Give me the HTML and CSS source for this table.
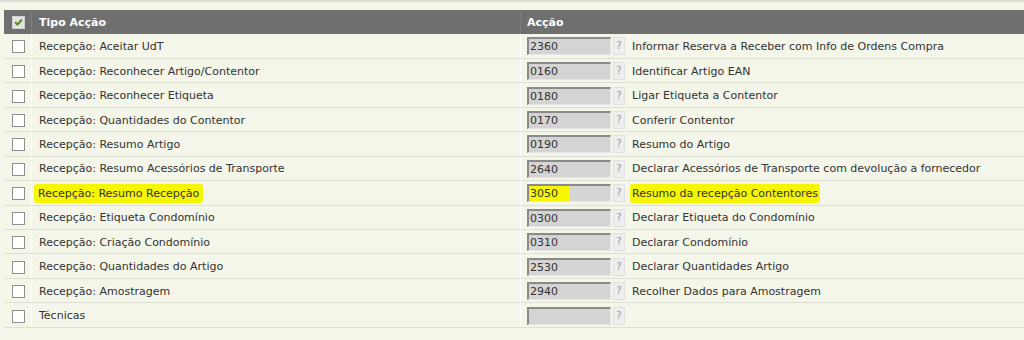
FILE: index.html
```html
<!DOCTYPE html>
<html lang="pt">
<head>
<meta charset="utf-8">
<link rel="stylesheet" href="styles.css">
</head>
<body>
<div class="page">
<table class="grid">
  <thead>
    <tr>
      <th class="c-chk"><span class="hchk"><svg width="9" height="8" viewBox="0 0 9 8"><path d="M1 4 L3.5 6.5 L8 1.5" fill="none" stroke="#5c8a1e" stroke-width="2"/></svg></span></th>
      <th class="c-tipo">Tipo Acção</th>
      <th class="c-acc">Acção</th>
    </tr>
  </thead>
  <tbody>
    <tr><td class="c-chk"><span class="chk"></span></td><td class="c-tipo">Recepção: Aceitar UdT</td><td class="c-acc"><div class="acc"><span class="inp">2360</span><span class="q">?</span><span class="desc">Informar Reserva a Receber com Info de Ordens Compra</span></div></td></tr>
    <tr><td class="c-chk"><span class="chk"></span></td><td class="c-tipo">Recepção: Reconhecer Artigo/Contentor</td><td class="c-acc"><div class="acc"><span class="inp">0160</span><span class="q">?</span><span class="desc">Identificar Artigo EAN</span></div></td></tr>
    <tr><td class="c-chk"><span class="chk"></span></td><td class="c-tipo">Recepção: Reconhecer Etiqueta</td><td class="c-acc"><div class="acc"><span class="inp">0180</span><span class="q">?</span><span class="desc">Ligar Etiqueta a Contentor</span></div></td></tr>
    <tr><td class="c-chk"><span class="chk"></span></td><td class="c-tipo">Recepção: Quantidades do Contentor</td><td class="c-acc"><div class="acc"><span class="inp">0170</span><span class="q">?</span><span class="desc">Conferir Contentor</span></div></td></tr>
    <tr><td class="c-chk"><span class="chk"></span></td><td class="c-tipo">Recepção: Resumo Artigo</td><td class="c-acc"><div class="acc"><span class="inp">0190</span><span class="q">?</span><span class="desc">Resumo do Artigo</span></div></td></tr>
    <tr><td class="c-chk"><span class="chk"></span></td><td class="c-tipo">Recepção: Resumo Acessórios de Transporte</td><td class="c-acc"><div class="acc"><span class="inp">2640</span><span class="q">?</span><span class="desc">Declarar Acessórios de Transporte com devolução a fornecedor</span></div></td></tr>
    <tr><td class="c-chk"><span class="chk"></span></td><td class="c-tipo"><span class="hl hl-tipo">Recepção: Resumo Recepção</span></td><td class="c-acc"><div class="acc"><span class="inp"><span class="hl hl-val">3050</span></span><span class="q">?</span><span class="desc"><span class="hl hl-desc">Resumo da recepção Contentores</span></span></div></td></tr>
    <tr><td class="c-chk"><span class="chk"></span></td><td class="c-tipo">Recepção: Etiqueta Condomínio</td><td class="c-acc"><div class="acc"><span class="inp">0300</span><span class="q">?</span><span class="desc">Declarar Etiqueta do Condomínio</span></div></td></tr>
    <tr><td class="c-chk"><span class="chk"></span></td><td class="c-tipo">Recepção: Criação Condomínio</td><td class="c-acc"><div class="acc"><span class="inp">0310</span><span class="q">?</span><span class="desc">Declarar Condomínio</span></div></td></tr>
    <tr><td class="c-chk"><span class="chk"></span></td><td class="c-tipo">Recepção: Quantidades do Artigo</td><td class="c-acc"><div class="acc"><span class="inp">2530</span><span class="q">?</span><span class="desc">Declarar Quantidades Artigo</span></div></td></tr>
    <tr><td class="c-chk"><span class="chk"></span></td><td class="c-tipo">Recepção: Amostragem</td><td class="c-acc"><div class="acc"><span class="inp">2940</span><span class="q">?</span><span class="desc">Recolher Dados para Amostragem</span></div></td></tr>
    <tr><td class="c-chk"><span class="chk"></span></td><td class="c-tipo">Técnicas</td><td class="c-acc"><div class="acc"><span class="inp"></span><span class="q">?</span><span class="desc"></span></div></td></tr>
  </tbody>
</table>
</div>
</body>
</html>
```

FILE: styles.css
```css
html, body {
  margin: 0;
  padding: 0;
  background: #f3f6e9;
}
body {
  font-family: "DejaVu Sans", Verdana, sans-serif;
  font-size: 11px;
  color: #333333;
}
.page {
  border-top: 2px solid #dcdcd4;
  padding: 8px 0 0 4px;
  overflow: hidden;
}
.grid {
  border-collapse: collapse;
  width: 1030px;
  table-layout: fixed;
}
.grid th {
  background: #6f6f6f;
  color: #ffffff;
  font-weight: bold;
  text-align: left;
  height: 24px;
  padding: 0;
  border-left: 1px solid #7c7c7c;
}
.grid th:first-child { border-left: none; }
.grid tbody tr { height: 24.45px; }
.grid td {
  padding: 1px 0 0 0;
  border-bottom: 1px solid #dcdfd2;
  border-left: 1px solid #ffffff;
  vertical-align: middle;
}
.grid td:first-child { border-left: none; }
.c-chk { width: 27px; }
.grid th.c-chk, .grid td.c-chk { text-align: center; }
.grid .c-tipo { width: 481px; padding-left: 7px; }
.grid .c-acc { padding-left: 6px; }
.hchk {
  display: inline-flex;
  width: 11px;
  height: 11px;
  background: #e4e4e4;
  border: 1px solid #d0d0d0;
  align-items: center;
  justify-content: center;
  vertical-align: middle;
  margin-left: 2px;
}
.chk {
  display: inline-block;
  width: 11px;
  height: 11px;
  background: #ffffff;
  border: 1px solid #8f8f8f;
  vertical-align: middle;
  margin-left: 2px;
  margin-top: 1px;
}
.acc {
  display: flex;
  align-items: center;
}
.inp {
  box-sizing: border-box;
  width: 84px;
  height: 18px;
  background: #d4d4d4;
  border-top: 2px solid #8a8a8a;
  border-left: 2px solid #8a8a8a;
  border-right: 1px solid #e6e6e6;
  border-bottom: 1px solid #e6e6e6;
  padding-left: 1px;
  line-height: 15px;
  color: #333;
}
.q {
  box-sizing: border-box;
  margin-left: 2px;
  width: 12px;
  height: 18px;
  background: #eeeeee;
  border: 1px solid #e0e0e0;
  color: #9a9a9a;
  text-align: center;
  line-height: 16px;
  font-size: 10px;
}
.desc { margin-left: 7px; }
.hl { background: #f6f600; }
.hl-tipo { padding: 3px 4px; margin-left: -5px; border-radius: 3px; }
.hl-val { display: inline-block; padding-right: 12px; height: 15px; }
.hl-desc { padding: 3px 2px; margin-left: -2px; border-radius: 3px; }
```
